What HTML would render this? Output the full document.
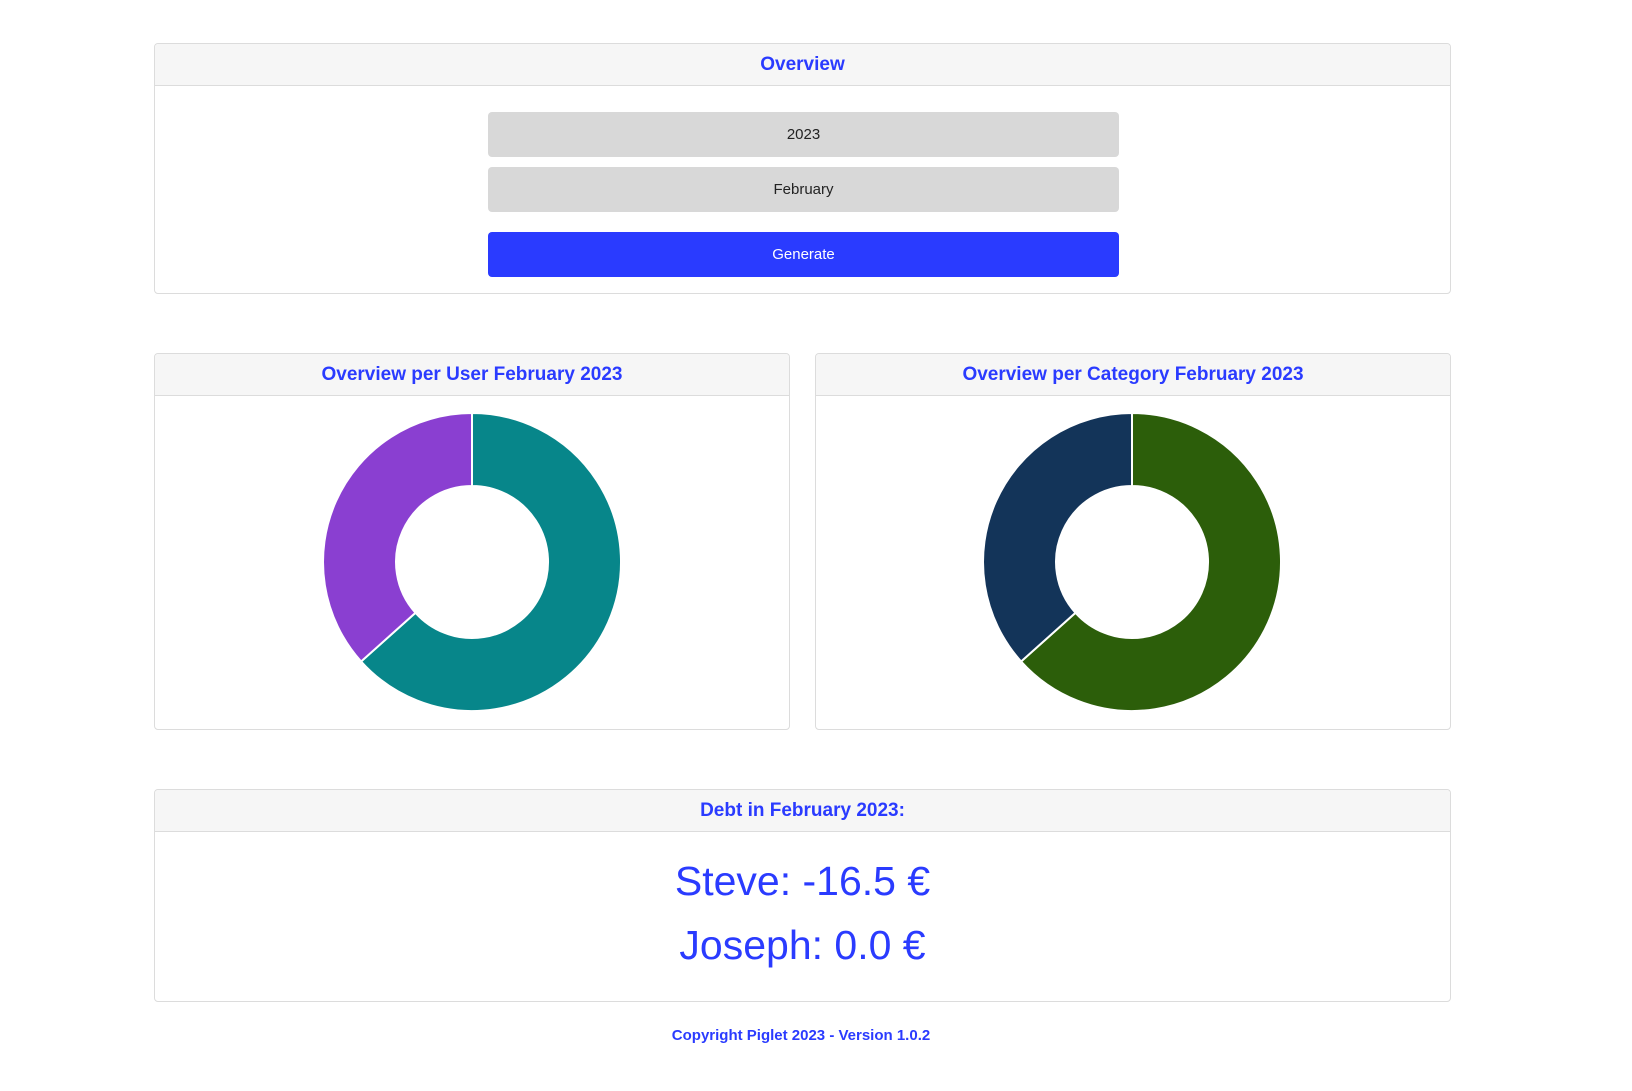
<!DOCTYPE html>
<html><head><meta charset="utf-8"><style>
body{margin:0;background:#fff;font-family:"Liberation Sans",sans-serif;width:1632px;height:1091px;position:relative;overflow:hidden}
.card{position:absolute;border:1px solid #dcdcdc;border-radius:4px;box-sizing:border-box;background:#fff}
.hd{background:#f6f6f6;border-bottom:1px solid #dcdcdc;height:41px;line-height:42px;text-align:center;color:#2a3bff;font-weight:bold;font-size:19px;border-radius:4px 4px 0 0}
.in{position:absolute;left:333px;width:631px;height:45px;line-height:45px;text-align:center;border-radius:4px;background:#d8d8d8;color:#222;font-size:15px}
.t{position:absolute;left:0;right:0;text-align:center;color:#2a3bff}
</style></head><body>
<div class="card" style="left:154px;top:43px;width:1297px;height:251px">
<div class="hd">Overview</div>
<div class="in" style="top:68px">2023</div>
<div class="in" style="top:123px">February</div>
<div class="in" style="top:188px;background:#2a3bff;color:#fff">Generate</div>
</div>
<div class="card" style="left:154px;top:353px;width:636px;height:377px"><div class="hd">Overview per User February 2023</div></div>
<div class="card" style="left:815px;top:353px;width:636px;height:377px"><div class="hd">Overview per Category February 2023</div></div>
<svg style="position:absolute;left:0;top:0" width="1632" height="1091">
<g transform="translate(472,562)">
<path d="M0,-149 A149,149 0 1 1 -110.9,99.5 L-56.5,50.8 A76,76 0 1 0 0,-76Z" fill="#07868a" stroke="#fff" stroke-width="2"/>
<path d="M-110.9,99.5 A149,149 0 0 1 0,-149 L0,-76 A76,76 0 0 0 -56.5,50.8Z" fill="#8a3fd1" stroke="#fff" stroke-width="2"/>
</g>
<g transform="translate(1132,562)">
<path d="M0,-149 A149,149 0 1 1 -110.9,99.5 L-56.5,50.8 A76,76 0 1 0 0,-76Z" fill="#2c5e0a" stroke="#fff" stroke-width="2"/>
<path d="M-110.9,99.5 A149,149 0 0 1 0,-149 L0,-76 A76,76 0 0 0 -56.5,50.8Z" fill="#133459" stroke="#fff" stroke-width="2"/>
</g>
</svg>
<div class="card" style="left:154px;top:789px;width:1297px;height:213px">
<div class="hd">Debt in February 2023:</div>
<div class="t" style="top:68px;font-size:41px">Steve: -16.5 €</div>
<div class="t" style="top:132px;font-size:41px">Joseph: 0.0 €</div>
</div>
<div class="t" style="top:1027px;font-size:15px;font-weight:bold;right:30px">Copyright Piglet 2023 - Version 1.0.2</div>
</body></html>
